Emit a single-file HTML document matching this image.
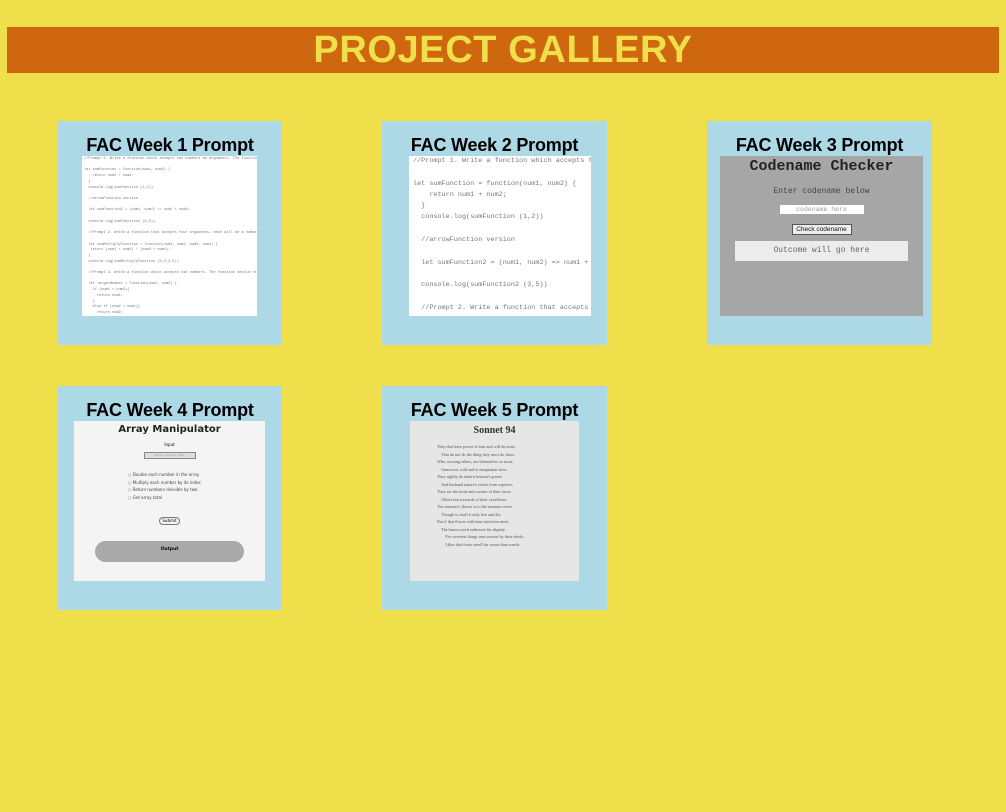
<!DOCTYPE html>
<html><head><style>
*{margin:0;padding:0;box-sizing:border-box}
body{width:1006px;height:812px;background:#efdf4b;position:relative;overflow:hidden;font-family:"Liberation Sans",sans-serif}
.hdr{position:absolute;left:7px;top:27px;width:992px;height:46px;background:#cf670f;color:#efdf4b;font-weight:bold;font-size:38px;text-align:center;line-height:46px;letter-spacing:0.6px}
.card{position:absolute;width:224px;height:224px;background:#add8e6}
.t{position:absolute;left:0;width:100%;top:14px;text-align:center;font-weight:bold;font-size:18px;letter-spacing:-0.2px;color:#000;white-space:nowrap}
.img{position:absolute;overflow:hidden}
.code{font-family:"Liberation Mono",monospace;color:#777;white-space:pre}
</style></head><body>
<div class="hdr">PROJECT GALLERY</div>

<div class="card" style="left:58px;top:121px">
<div class="t">FAC Week 1 Prompt</div>
<div class="img code" style="left:24px;top:35px;width:175px;height:160px;background:#fff;font-size:3.6px;line-height:5.7px;padding:1px 2px">//Prompt 1. Write a function which accepts two numbers as arguments. The function should r

let sumFunction = function(num1, num2) {
    return num1 + num2;
  }
  console.log(sumFunction (1,2))

  //arrowFunction version

  let sumFunction2 = (num1, num2) => num1 + num2;

  console.log(sumFunction2 (3,5))

  //Prompt 2. Write a function that accepts four arguments, each will be a number. The fun

  let sumMultiplyFunction = function(num1, num2, num3, num4) {
   return (num1 + num2) * (num3 + num4);
  }
  console.log(sumMultiplyFunction (5,2,4,5))

  //Prompt 3. Write a function which accepts two numbers. The function should return the l

  let largerNumber = function(num1, num2) {
    if (num1 > num2){
      return num1;
    }
    else if (num2 > num1){
      return num2;</div>
</div>

<div class="card" style="left:382px;top:121px;width:225px">
<div class="t">FAC Week 2 Prompt</div>
<div class="img code" style="left:27px;top:35px;width:182px;height:160px;background:#fff;font-size:6.8px;line-height:11.3px;padding:0 2px 0 4px">//Prompt 1. Write a function which accepts two num

let sumFunction = function(num1, num2) {
    return num1 + num2;
  }
  console.log(sumFunction (1,2))

  //arrowFunction version

  let sumFunction2 = (num1, num2) => num1 + num2;

  console.log(sumFunction2 (3,5))

  //Prompt 2. Write a function that accepts four a</div>
</div>

<div class="card" style="left:707px;top:121px;width:225px">
<div class="t">FAC Week 3 Prompt</div>
<div class="img" style="left:13px;top:35px;width:203px;height:160px;background:#a6a6a6;font-family:'Liberation Mono',monospace;text-align:center">
<div style="font-size:15px;font-weight:bold;color:#222;margin-top:2px">Codename Checker</div>
<div style="font-size:8px;color:#444;margin-top:12px">Enter codename below</div>
<div style="width:84px;height:9px;background:#fff;margin:9px auto 0;font-size:6.5px;color:#999;line-height:9px">codename here</div>
<div style="width:60px;height:11px;background:#eee;border:1px solid #555;margin:10px auto 0;font-family:'Liberation Sans',sans-serif;font-size:6.5px;line-height:9px;color:#111">Check codename</div>
<div style="width:173px;height:20px;background:#ececec;margin:6px auto 0;font-size:8px;line-height:20px;color:#666">Outcome will go here</div>
</div>
</div>

<div class="card" style="left:58px;top:386px">
<div class="t">FAC Week 4 Prompt</div>
<div class="img" style="left:16px;top:35px;width:191px;height:160px;background:#f4f4f4;font-family:'DejaVu Sans',sans-serif;text-align:center">
<div style="font-size:10px;font-weight:bold;color:#222;margin-top:3px">Array Manipulator</div>
<div style="font-size:4px;margin-top:7px">Input</div>
<div style="width:52px;height:7px;border:1px solid #888;background:#ddd;margin:5px auto 0;font-size:3px;color:#999;line-height:5px">enter numbers here</div>
<div style="text-align:left;margin:12px 0 0 54px;font-size:4px;line-height:7.5px;color:#444">○ Double each number in the array<br>○ Multiply each number by its index<br>○ Return numbers divisible by two<br>○ Get array total</div>
<div style="width:21px;height:8px;border:1px solid #777;border-radius:4px;margin:16px auto 0;font-size:4px;line-height:6px">Submit</div>
<div style="width:149px;height:21px;border-radius:11px;background:#a9a9a9;margin:16px auto 0;font-size:4.5px;line-height:18px;font-weight:bold">Output</div>
</div>
</div>

<div class="card" style="left:382px;top:386px;width:225px">
<div class="t">FAC Week 5 Prompt</div>
<div class="img" style="left:28px;top:35px;width:169px;height:160px;background:#e6e6e6;font-family:'Liberation Serif',serif;color:#555">
<div style="font-size:10px;font-weight:bold;color:#333;text-align:center;margin-top:4px">Sonnet 94</div>
<div style="font-size:4.2px;line-height:7.5px;margin:7px 0 0 27px;white-space:pre">They that have power to hurt and will do none,
    That do not do the thing they most do show,
Who, moving others, are themselves as stone,
    Unmoved, cold and to temptation slow:
They rightly do inherit heaven's graces
    And husband nature's riches from expense;
They are the lords and owners of their faces,
    Others but stewards of their excellence.
The summer's flower is to the summer sweet
    Though to itself it only live and die,
But if that flower with base infection meet,
    The basest weed outbraves his dignity:
        For sweetest things turn sourest by their deeds;
        Lilies that fester smell far worse than weeds.</div>
</div>
</div>
</body></html>
